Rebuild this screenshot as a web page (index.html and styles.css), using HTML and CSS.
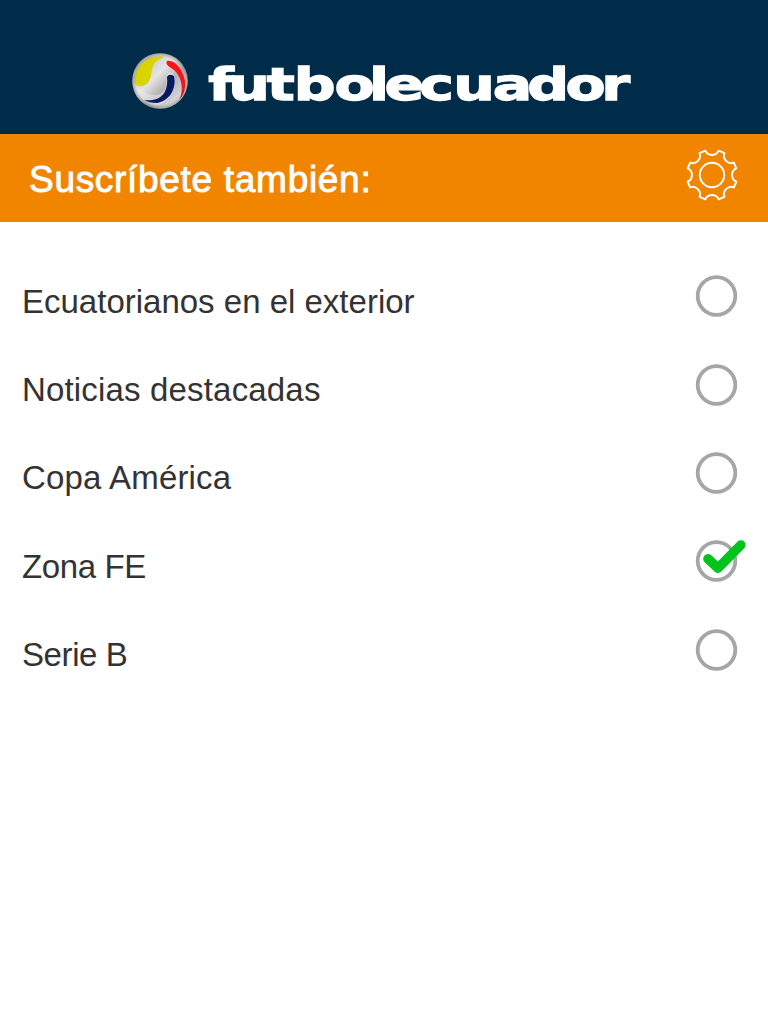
FILE: index.html
```html
<!DOCTYPE html>
<html lang="es">
<head>
<meta charset="utf-8">
<title>futbolecuador</title>
<link rel="stylesheet" href="styles.css">
</head>
<body>
<header class="brand">
  <svg class="logo" viewBox="128 44 512 70" role="img" aria-label="futbolecuador">
    <defs>
      <linearGradient id="ball" x1="0" y1="0" x2="1" y2="1">
        <stop offset="0" stop-color="#b5b5b5"/><stop offset=".42" stop-color="#e4e4e4"/>
        <stop offset=".6" stop-color="#b4b4b7"/><stop offset="1" stop-color="#f4f4f4"/>
      </linearGradient>
      <radialGradient id="shade"><stop offset=".85" stop-color="#333" stop-opacity="0"/><stop offset="1" stop-color="#333" stop-opacity=".3"/></radialGradient>
    </defs>
    <circle cx="160" cy="81" r="27.8" fill="url(#ball)"/>
    <path d="M134 85C142 93 154 98 162 93C170 88 164 76 169 73C176 70 180 91 163 103C151 110 137 99 134 85Z" fill="#f2f2f2" opacity=".45"/>
    <path d="M164 57C153 55 141 60 136 73C132 84 137 87 142 86C153 84 150 71 154 64C157 59 162 59 164 57Z" fill="#d9d400"/>
    <path d="M167 61C174 59 183 69 185 81C186 89 183 96 180 99C184 87 181 76 174 70C169 66 165 65 167 61Z" fill="#fa1418"/>
    <path d="M167 77Q169 73 174 76C177 89 169 101 157 103Q149 103 144 100C158 102 169 95 167 77Z" fill="#071b60"/>
    <circle cx="160" cy="81" r="27.8" fill="url(#shade)"/>
    <text class="wordmark" transform="translate(0 99.6) scale(1.3 1)" x="160.2 175.5 205.2 226 257.3 283.8 295.7 322.5 348.7 379 405.5 435 462.6" y="0">futbolecuador</text>
  </svg>
</header>
<section class="heading">
  <h1 class="title">Suscríbete también:</h1>
  <svg class="gear" viewBox="-27 -27 54 54">
    <path d="M-6.7-24.3A7.4 7.4 0 0 0 6.7-24.3L12.4-21.9A7.4 7.4 0 0 0 21.9-12.4L24.3-6.7A7.4 7.4 0 0 0 24.3 6.7L21.9 12.4A7.4 7.4 0 0 0 12.4 21.9L6.7 24.3A7.4 7.4 0 0 0-6.7 24.3L-12.4 21.9A7.4 7.4 0 0 0-21.9 12.4L-24.3 6.7A7.4 7.4 0 0 0-24.3-6.7L-21.9-12.4A7.4 7.4 0 0 0-12.4-21.9Z"/>
    <circle r="12.2"/>
  </svg>
</section>
<ul class="topics">
  <li class="topic"><span class="label">Ecuatorianos en el exterior</span><svg class="radio" viewBox="0 0 52 52"><circle cx="22.5" cy="26" r="18.8"/></svg></li>
  <li class="topic"><span class="label label-loose">Noticias destacadas</span><svg class="radio" viewBox="0 0 52 52"><circle cx="22.5" cy="26" r="18.8"/></svg></li>
  <li class="topic"><span class="label label-loose">Copa América</span><svg class="radio" viewBox="0 0 52 52"><circle cx="22.5" cy="26" r="18.8"/></svg></li>
  <li class="topic"><span class="label label-tight">Zona FE</span><svg class="radio" viewBox="0 0 52 52"><circle cx="22.5" cy="26" r="18.8"/><path class="check" d="M14 23.8L24 33.2L46.8 10"/></svg></li>
  <li class="topic"><span class="label label-tight">Serie B</span><svg class="radio" viewBox="0 0 52 52"><circle cx="22.5" cy="26" r="18.8"/></svg></li>
</ul>
</body>
</html>
```
FILE: styles.css
```css
* { box-sizing: border-box; }
body {
  margin: 0;
  min-height: 1024px;
  background: #fff;
  color: #333;
  font-family: "Liberation Sans", Arial, sans-serif;
}
.brand {
  height: 134px;
  padding: 44px 0 0 128px;
  background: #002b49;
}
.logo { display: block; width: 512px; height: 70px; }
.wordmark {
  font-family: "DejaVu Sans", sans-serif;
  font-size: 45px;
  font-weight: 700;
  fill: #fff;
  stroke: #fff;
  stroke-width: 1.3;
}
.heading {
  display: flex;
  justify-content: space-between;
  align-items: flex-start;
  height: 88px;
  padding: 13.5px 29.5px 0 29px;
  background: #f28500;
}
.title {
  margin: 10.5px 0 0;
  font-size: 37px;
  line-height: 44px;
  font-weight: 400;
  letter-spacing: .7px;
  color: #fff;
  -webkit-text-stroke: .9px #fff;
}
.gear {
  width: 54px;
  height: 54px;
  fill: none;
  stroke: #fff;
  stroke-width: 2;
  stroke-linejoin: round;
}
.topics {
  margin: 0;
  padding: 30px 22px 0;
  list-style: none;
}
.topic {
  display: flex;
  justify-content: space-between;
  align-items: center;
  height: 88.4px;
}
.label {
  padding-top: 11px;
  font-size: 33px;
  line-height: 40px;
}
.label-loose { letter-spacing: .17px; }
.label-tight { letter-spacing: -.4px; }
.radio { width: 52px; height: 52px; fill: none; stroke: #a6a6a6; stroke-width: 3.8; }
.check { stroke: #00c41c; stroke-width: 9.6; stroke-linecap: round; stroke-linejoin: round; }
```
